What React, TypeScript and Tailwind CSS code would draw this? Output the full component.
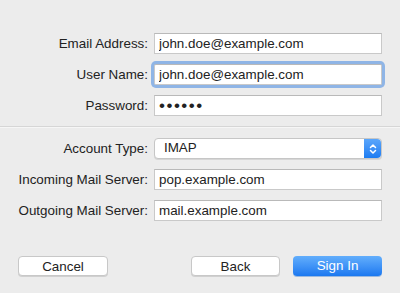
import { FC } from 'react';

const fieldClass =
  'h-[21px] w-full border border-[#c9c9c9] border-t-[#b9b9b9] bg-white px-[4px] text-[13.4px] text-[#222] outline-none';

const Label: FC<{ text: string }> = function ({ text }) {
  return <label className="text-right text-[13.4px] leading-[21px] text-[#222]">{text}</label>;
};

const Stepper: FC = function () {
  return (
    <span className="flex h-full w-[17px] items-center justify-center rounded-r-[4px] bg-gradient-to-b from-[#5aa6fb] to-[#1b7cf2]">
      <svg width="8" height="12" viewBox="0 0 8 12" fill="none" stroke="white" strokeWidth="1.5" strokeLinecap="round" strokeLinejoin="round">
        <path d="M1.5 4.5 4 2l2.5 2.5" />
        <path d="M1.5 7.5 4 10l2.5-2.5" />
      </svg>
    </span>
  );
};

const App: FC = function () {
  return (
    <div
      className="flex h-[293px] w-[400px] flex-col bg-[#ececec] px-[18px] pt-[33px]"
      style={{ fontFamily: '"Liberation Sans", Arial, sans-serif' }}
    >
      <div className="grid grid-cols-[130px_228px] gap-x-[6px] gap-y-[10px]">
        <Label text="Email Address:" />
        <input className={fieldClass} readOnly defaultValue="john.doe@example.com" />
        <Label text="User Name:" />
        <input
          className={`${fieldClass} rounded-[2px] shadow-[0_0_0_3px_#8fb5e6]`}
          readOnly
          defaultValue="john.doe@example.com"
        />
        <Label text="Password:" />
        <input
          className={`${fieldClass} text-[17px] tracking-[1.5px]`}
          type="password"
          readOnly
          defaultValue="secret"
        />
      </div>

      <div className="-mx-[18px] mt-[10px] mb-[10px] h-[2px] border-t border-[#d6d6d6] bg-[#f6f6f6]" />

      <div className="grid grid-cols-[130px_228px] gap-x-[6px] gap-y-[10px]">
        <Label text="Account Type:" />
        <div className="flex h-[21px] items-center rounded-[4px] border border-[#c6c6c6] bg-white shadow-[0_1px_0_#d6d6d6]">
          <span className="flex-1 pl-[9px] text-[13.4px] text-[#222]">IMAP</span>
          <Stepper />
        </div>
        <Label text="Incoming Mail Server:" />
        <input className={fieldClass} readOnly defaultValue="pop.example.com" />
        <Label text="Outgoing Mail Server:" />
        <input className={fieldClass} readOnly defaultValue="mail.example.com" />
      </div>

      <div className="mt-[35px] flex items-center">
        <button
          type="button"
          className="h-[20px] w-[90px] rounded-[4px] border border-[#c8c8c8] bg-white text-[13.4px] text-[#222] shadow-[0_1px_0_#d0d0d0]"
        >
          Cancel
        </button>
        <div className="flex-1" />
        <button
          type="button"
          className="h-[20px] w-[89px] rounded-[4px] border border-[#c8c8c8] bg-white text-[13.4px] text-[#222] shadow-[0_1px_0_#d0d0d0]"
        >
          Back
        </button>
        <button
          type="button"
          className="ml-[13px] h-[20px] w-[89px] rounded-[4px] bg-gradient-to-b from-[#62aefc] to-[#1a78f0] text-[13.4px] text-white shadow-[0_1px_0_#9bb9df]"
        >
          Sign In
        </button>
      </div>
    </div>
  );
};

export default App;
